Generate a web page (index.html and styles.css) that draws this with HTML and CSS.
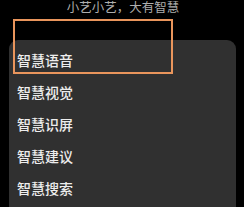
FILE: index.html
```html
<!DOCTYPE html>
<html lang="zh">
<head>
<meta charset="utf-8">
<link rel="stylesheet" href="styles.css">
</head>
<body>
<div class="screen">
  <div class="hint">小艺小艺，大有智慧</div>
  <div class="panel">
    <div class="item">智慧语音</div>
    <div class="item">智慧视觉</div>
    <div class="item">智慧识屏</div>
    <div class="item">智慧建议</div>
    <div class="item">智慧搜索</div>
  </div>
  <div class="focus"></div>
</div>
</body>
</html>
```
FILE: styles.css
```css
html, body {
  margin: 0;
  padding: 0;
  background: #000;
}
.screen {
  position: relative;
  width: 244px;
  height: 207px;
  overflow: hidden;
  display: flex;
  flex-direction: column;
  font-family: "Noto Sans CJK SC", "Noto Sans", sans-serif;
}
.hint {
  height: 40px;
  text-align: center;
  font-size: 12.5px;
  line-height: 13px;
  color: #aeaeae;
  padding-left: 2px;
}
.panel {
  flex: 1;
  margin: 0 8px 0 9px;
  padding: 4px 0 0 8px;
  background: #303030;
  border-radius: 9px 9px 0 0;
}
.item {
  height: 32px;
  line-height: 32px;
  font-size: 14px;
  font-weight: 500;
  color: #ededed;
}
.focus {
  position: absolute;
  left: 13px;
  top: 19px;
  width: 156px;
  height: 51px;
  border: 2px solid #e9955c;
}
```
